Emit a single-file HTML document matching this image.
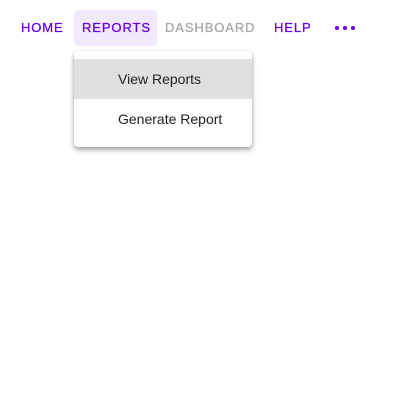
<!DOCTYPE html>
<html><head><style>
body{margin:0;width:420px;height:420px;background:#fff;font-family:"Liberation Sans",sans-serif;position:relative;overflow:hidden}
.t{position:absolute;top:19px;font-size:13px;line-height:18px;letter-spacing:0.9px;color:#6a00f0;-webkit-text-stroke:0.3px #6a00f0}
.bg{position:absolute;left:74px;top:10px;width:83px;height:36px;background:#f1e9fc;border-radius:4px}
.menu{position:absolute;left:74px;top:51px;width:178px;height:96px;background:#fff;border-radius:4px;box-shadow:0 3px 6px rgba(0,0,0,.3),0 1px 3px rgba(0,0,0,.15)}
.it{position:absolute;left:0;width:178px;height:40px;line-height:40px;font-size:14px;color:#222}
.it span{position:absolute;left:44px}
.d{position:absolute;top:26px;width:3.5px;height:3.5px;border-radius:50%;background:#6a00f0}
</style></head><body>
<div class="bg"></div>
<div class="t" style="left:21px">HOME</div>
<div class="t" style="left:82px">REPORTS</div>
<div class="t" style="left:165px;color:#a8a8a8;-webkit-text-stroke:0.3px #a8a8a8">DASHBOARD</div>
<div class="t" style="left:274px">HELP</div>
<div class="d" style="left:335px"></div><div class="d" style="left:343px"></div><div class="d" style="left:351px"></div>
<div class="menu">
<div class="it" style="top:8px;background:#e0e0e0"><span>View Reports</span></div>
<div class="it" style="top:48px"><span>Generate Report</span></div>
</div>
</body></html>
